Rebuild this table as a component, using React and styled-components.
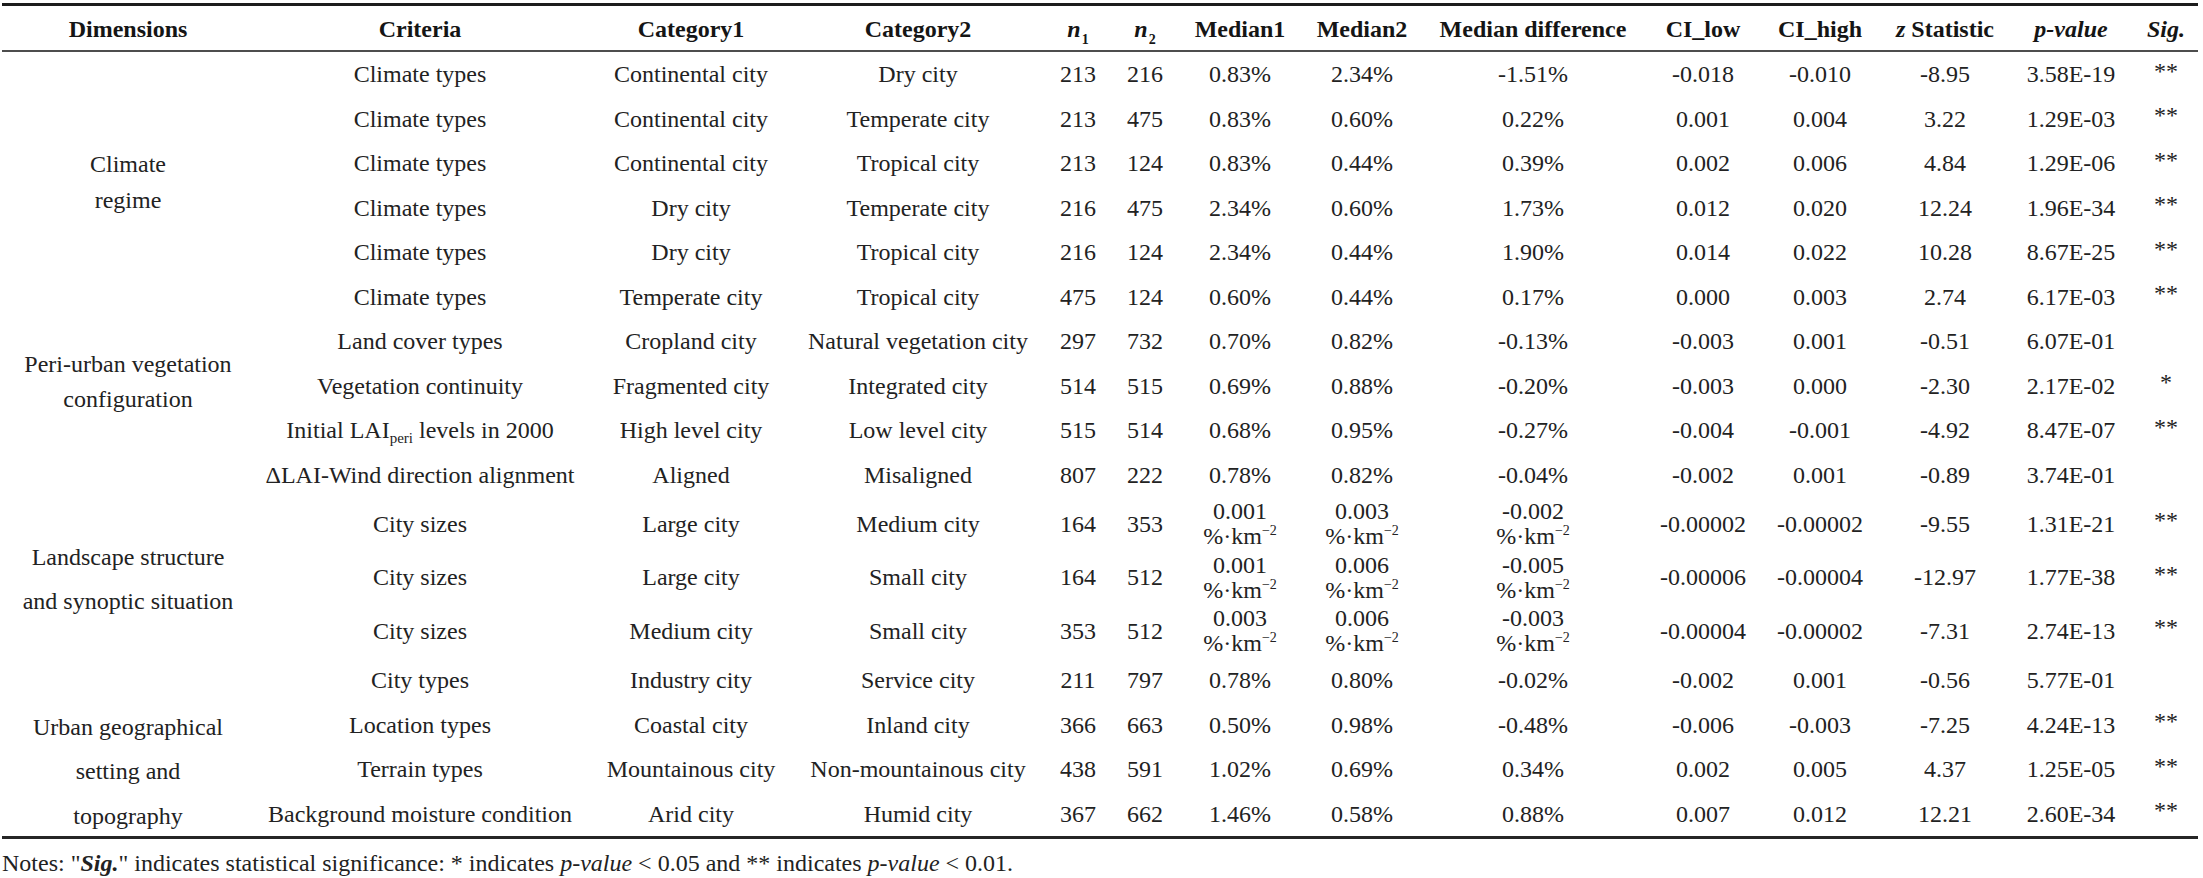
import React from 'react';
import styled, { createGlobalStyle } from 'styled-components';

const GlobalStyle = createGlobalStyle`
  html, body {
    margin: 0;
    padding: 0;
    background: #fff;
  }
  body {
    font-family: "Liberation Serif", "Times New Roman", "DejaVu Serif", serif;
    color: #1f1f1f;
  }
`;

const COLS = [252, 332, 210, 244, 76, 58, 132, 112, 230, 110, 124, 126, 126, 64];

const ROWS = [
  { dim: { lines: ['Climate', 'regime'], span: 6, top: 94, lh: 36 },
    cells: ['Climate types', 'Continental city', 'Dry city', '213', '216', '0.83%', '2.34%', '-1.51%', '-0.018', '-0.010', '-8.95', '3.58E-19', '**'] },
  { cells: ['Climate types', 'Continental city', 'Temperate city', '213', '475', '0.83%', '0.60%', '0.22%', '0.001', '0.004', '3.22', '1.29E-03', '**'] },
  { cells: ['Climate types', 'Continental city', 'Tropical city', '213', '124', '0.83%', '0.44%', '0.39%', '0.002', '0.006', '4.84', '1.29E-06', '**'] },
  { cells: ['Climate types', 'Dry city', 'Temperate city', '216', '475', '2.34%', '0.60%', '1.73%', '0.012', '0.020', '12.24', '1.96E-34', '**'] },
  { cells: ['Climate types', 'Dry city', 'Tropical city', '216', '124', '2.34%', '0.44%', '1.90%', '0.014', '0.022', '10.28', '8.67E-25', '**'] },
  { cells: ['Climate types', 'Temperate city', 'Tropical city', '475', '124', '0.60%', '0.44%', '0.17%', '0.000', '0.003', '2.74', '6.17E-03', '**'] },
  { dim: { lines: ['Peri-urban vegetation', 'configuration'], span: 4, top: 28, lh: 35 },
    cells: ['Land cover types', 'Cropland city', 'Natural vegetation city', '297', '732', '0.70%', '0.82%', '-0.13%', '-0.003', '0.001', '-0.51', '6.07E-01', ''] },
  { cells: ['Vegetation continuity', 'Fragmented city', 'Integrated city', '514', '515', '0.69%', '0.88%', '-0.20%', '-0.003', '0.000', '-2.30', '2.17E-02', '*'] },
  { cells: ['lai', 'High level city', 'Low level city', '515', '514', '0.68%', '0.95%', '-0.27%', '-0.004', '-0.001', '-4.92', '8.47E-07', '**'] },
  { cells: ['\u0394LAI-Wind direction alignment', 'Aligned', 'Misaligned', '807', '222', '0.78%', '0.82%', '-0.04%', '-0.002', '0.001', '-0.89', '3.74E-01', ''] },
  { dim: { lines: ['Landscape structure', 'and synoptic situation'], span: 3, top: 38, lh: 44 },
    cells: ['City sizes', 'Large city', 'Medium city', '164', '353', 'u0.001', 'u0.003', 'u-0.002', '-0.00002', '-0.00002', '-9.55', '1.31E-21', '**'] },
  { cells: ['City sizes', 'Large city', 'Small city', '164', '512', 'u0.001', 'u0.006', 'u-0.005', '-0.00006', '-0.00004', '-12.97', '1.77E-38', '**'] },
  { cells: ['City sizes', 'Medium city', 'Small city', '353', '512', 'u0.003', 'u0.006', 'u-0.003', '-0.00004', '-0.00002', '-7.31', '2.74E-13', '**'] },
  { dim: { lines: ['Urban geographical', 'setting and', 'topography'], span: 4, top: 47, lh: 44.5 },
    cells: ['City types', 'Industry city', 'Service city', '211', '797', '0.78%', '0.80%', '-0.02%', '-0.002', '0.001', '-0.56', '5.77E-01', ''] },
  { cells: ['Location types', 'Coastal city', 'Inland city', '366', '663', '0.50%', '0.98%', '-0.48%', '-0.006', '-0.003', '-7.25', '4.24E-13', '**'] },
  { cells: ['Terrain types', 'Mountainous city', 'Non-mountainous city', '438', '591', '1.02%', '0.69%', '0.34%', '0.002', '0.005', '4.37', '1.25E-05', '**'] },
  { cells: ['Background moisture condition', 'Arid city', 'Humid city', '367', '662', '1.46%', '0.58%', '0.88%', '0.007', '0.012', '12.21', '2.60E-34', '**'] },
];

const renderValue = v => {
  if (v === 'lai') {
    return (
      <span>
        Initial LAI<Sub>peri</Sub> levels in 2000
      </span>
    );
  }
  if (v.startsWith('u')) {
    return (
      <Stack>
        <span>{v.slice(1)}</span>
        <span>
          %·km<Sup>−2</Sup>
        </span>
      </Stack>
    );
  }
  return v;
};

const App = () => {
  return (
    <Page>
      <GlobalStyle />
      <Table>
        <Head>Dimensions</Head>
        <Head>Criteria</Head>
        <Head>Category1</Head>
        <Head>Category2</Head>
        <Head>
          <span>
            <i>n</i>
            <HeadSub>1</HeadSub>
          </span>
        </Head>
        <Head>
          <span>
            <i>n</i>
            <HeadSub>2</HeadSub>
          </span>
        </Head>
        <Head>Median1</Head>
        <Head>Median2</Head>
        <Head>Median difference</Head>
        <Head>CI_low</Head>
        <Head>CI_high</Head>
        <Head>
          <span>
            <i>z</i> Statistic
          </span>
        </Head>
        <Head>
          <i>p-value</i>
        </Head>
        <Head>
          <i>Sig.</i>
        </Head>

        {ROWS.map((row, i) => (
          <React.Fragment key={i}>
            {row.dim && (
              <DimCell $span={row.dim.span} $top={row.dim.top} $lh={row.dim.lh}>
                {row.dim.lines.map(line => (
                  <span key={line}>{line}</span>
                ))}
              </DimCell>
            )}
            {row.cells.map((c, j) => (
              <Cell key={j} $sig={j === 12}>
                {renderValue(c)}
              </Cell>
            ))}
          </React.Fragment>
        ))}
      </Table>
      <Notes>
        Notes: "<b><i>Sig.</i></b>" indicates statistical significance: * indicates <i>p-value</i> &lt; 0.05 and **
        indicates <i>p-value</i> &lt; 0.01.
      </Notes>
    </Page>
  );
};

export default App;

const Page = styled.div`
  width: 2203px;
  height: 878px;
  box-sizing: border-box;
  padding: 3px 0 0 2px;
  overflow: hidden;
`;

const Table = styled.div`
  display: grid;
  width: 2196px;
  grid-template-columns: ${COLS.map(c => `${c}px`).join(' ')};
  grid-template-rows: 46px repeat(10, 44.5px) repeat(3, 53.6px) repeat(4, 44.5px);
  border-top: 3px solid #1c1c1c;
  border-bottom: 3px solid #262626;
`;

const Head = styled.div`
  display: flex;
  align-items: center;
  justify-content: center;
  box-sizing: border-box;
  border-bottom: 2px solid #4d4d4d;
  padding-top: 2px;
  font-size: 24px;
  font-weight: bold;
  color: #151515;
  white-space: nowrap;
`;

const HeadSub = styled.sub`
  font-size: 14px;
  font-weight: bold;
  vertical-align: -7px;
  line-height: 0;
  margin-left: 1px;
`;

const Cell = styled.div`
  display: flex;
  align-items: center;
  justify-content: center;
  font-size: 24px;
  line-height: 25px;
  text-align: center;
  white-space: nowrap;
  color: #222;
  padding-top: ${props => (props.$sig ? '0' : '1px')};
  padding-bottom: ${props => (props.$sig ? '6px' : '0')};
`;

const DimCell = styled.div`
  grid-column: 1;
  grid-row: span ${props => props.$span};
  display: flex;
  flex-direction: column;
  align-items: center;
  box-sizing: border-box;
  padding-top: ${props => props.$top}px;
  font-size: 24px;
  line-height: ${props => props.$lh}px;
  text-align: center;
  white-space: nowrap;
  color: #222;
`;

const Stack = styled.span`
  display: flex;
  flex-direction: column;
  align-items: center;
  line-height: 25px;
`;

const Sub = styled.sub`
  font-size: 15px;
  vertical-align: -5px;
  line-height: 0;
`;

const Sup = styled.sup`
  font-size: 14px;
  vertical-align: 9px;
  line-height: 0;
`;

const Notes = styled.div`
  margin-top: 10px;
  font-size: 24px;
  line-height: 28px;
  color: #222;
  white-space: nowrap;
`;
